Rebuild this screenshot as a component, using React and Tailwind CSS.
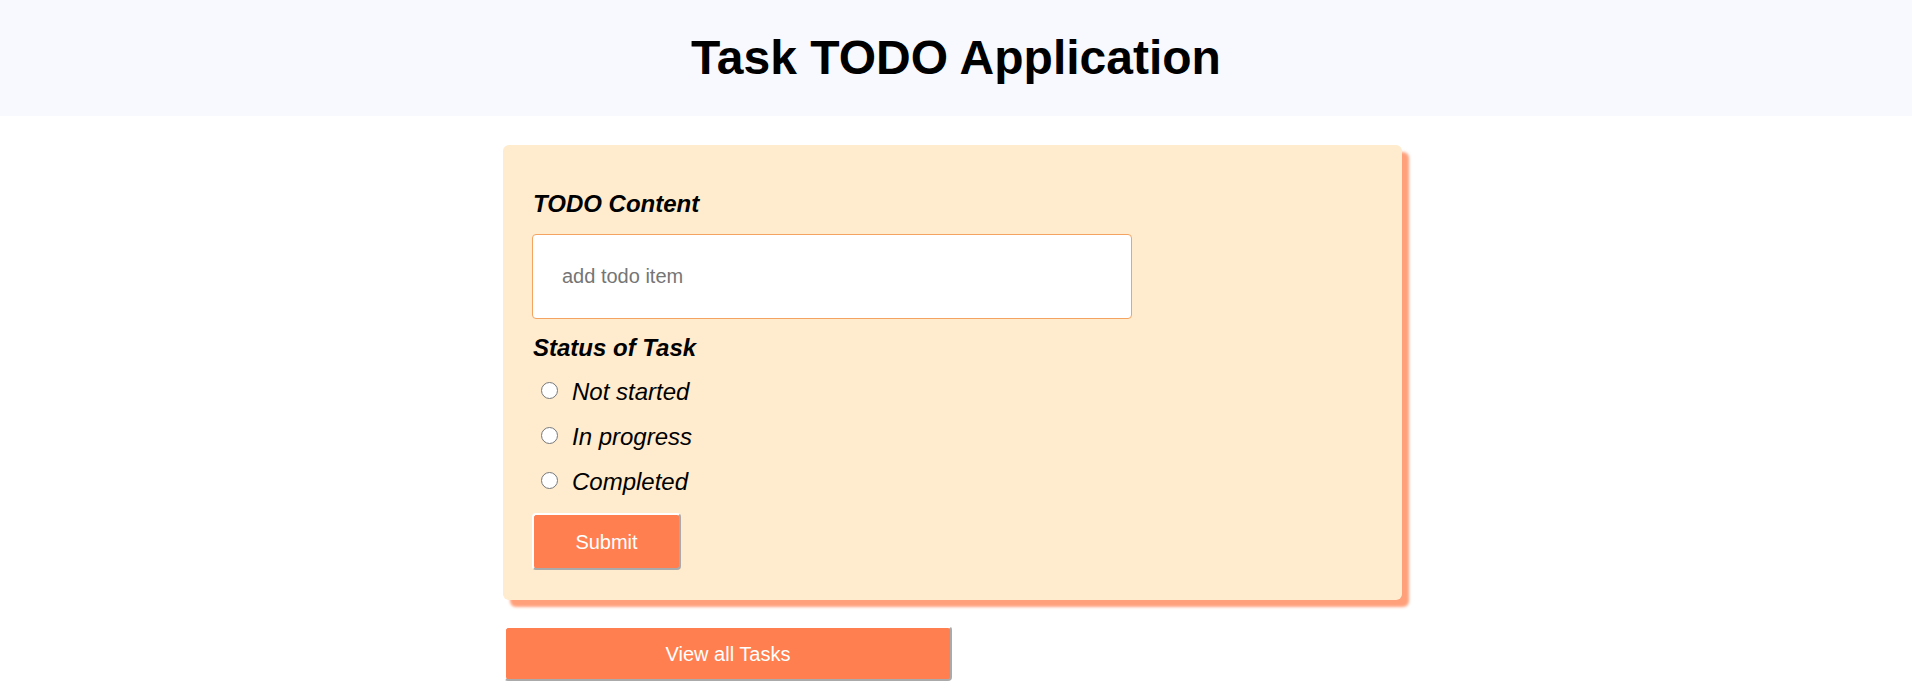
import React, { useState } from 'react';

const statuses = ['Not started', 'In progress', 'Completed'];

const App = () => {
  const [content, setContent] = useState('');
  const [status, setStatus] = useState('');

  return (
    <div className="min-h-screen bg-white text-black font-['Liberation_Sans',Arial,sans-serif]">
      {/* Header */}
      <header className="bg-[#f8f8ff] pt-[30px] pb-[31px]">
        <h1 className="text-center text-[48px] leading-[55px] font-bold">Task TODO Application</h1>
      </header>

      <div className="w-[906px] mx-auto mt-[29px]">
        {/* Form card */}
        <form
          className="w-[899px] bg-[#ffebcd] rounded-md pt-[45px] pb-[30px] px-[30px] shadow-[7px_7px_3px_#ffa07a]"
          onSubmit={(e) => e.preventDefault()}
        >
          <label className="block text-[24px] leading-[28px] font-bold italic">TODO Content</label>
          <input
            type="text"
            value={content}
            onChange={(e) => setContent(e.target.value)}
            placeholder="add todo item"
            className="block mt-[16px] w-[600px] h-[85px] -ml-px bg-white border border-[#f4a460] rounded-[4px] pl-[29px] text-[20px] placeholder:text-[#757575] outline-none"
          />

          <label className="block mt-[15px] text-[24px] leading-[28px] font-bold italic">Status of Task</label>
          <div className="flex flex-col gap-[17px] mt-[16px]">
            {statuses.map((s) => (
              <label key={s} className="flex items-center h-[28px] text-[24px] italic">
                <input
                  type="radio"
                  name="status"
                  value={s}
                  checked={status === s}
                  onChange={() => setStatus(s)}
                  className="w-[17px] h-[17px] m-0 ml-[8px] mr-[14px] -mt-[4px]"
                />
                {s}
              </label>
            ))}
          </div>

          <button
            type="submit"
            className="block mt-[17px] -ml-px w-[149px] h-[57px] bg-[#ff7f50] text-white text-[20px] border-2 border-t-white border-l-white border-r-[#aaaaaa] border-b-[#aaaaaa] rounded-[4px]"
          >
            Submit
          </button>
        </form>

        <button className="block mt-[26px] ml-[1px] w-[448px] h-[55px] bg-[#ff7f50] text-white text-[20px] border-2 border-t-white border-l-white border-r-[#aaaaaa] border-b-[#aaaaaa] rounded-[4px]">
          View all Tasks
        </button>
      </div>
    </div>
  );
};

export default App;
